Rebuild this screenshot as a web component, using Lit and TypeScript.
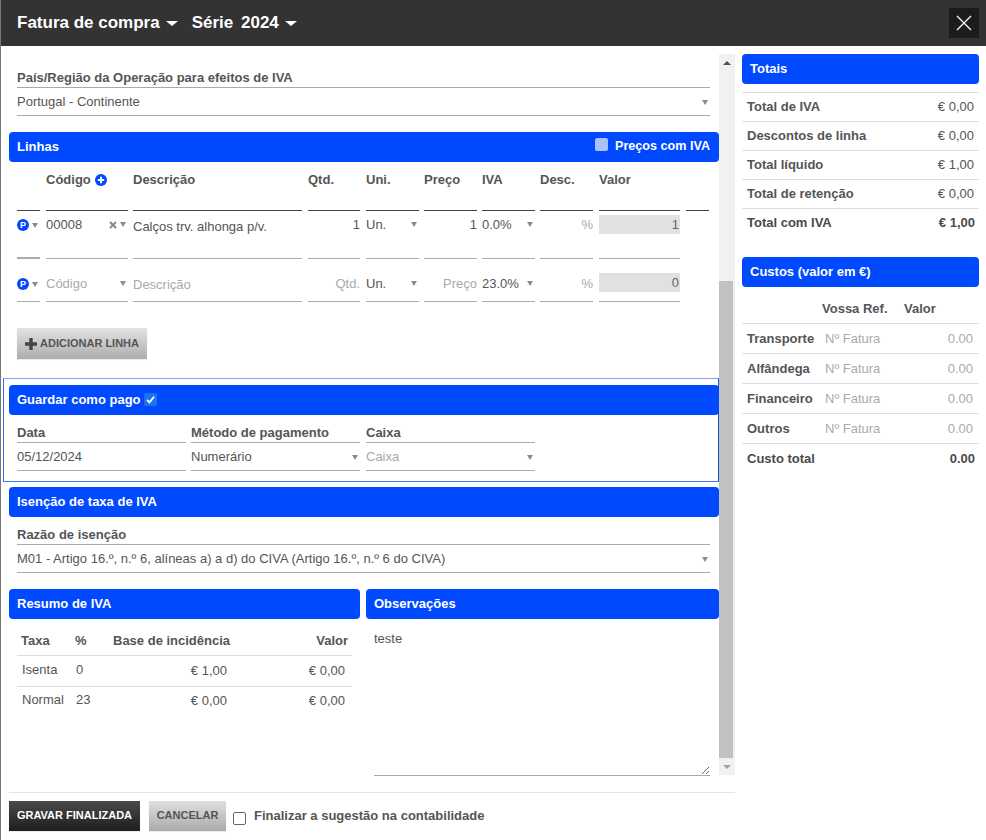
import { LitElement, html, css } from "lit";
import { customElement } from "lit/decorators.js";

const caret = html`<span class="caret"></span>`;
const pill = html`<span class="pcell"><span class="p">P</span>${caret}</span>`;

@customElement("app-root")
export class AppRoot extends LitElement {
  static styles = css`
    :host { display: flex; flex-direction: column; width: 986px; height: 840px; overflow: hidden; background: #fff; font: 13px/1.2 "Liberation Sans", Arial, sans-serif; color: #555; border-left: 1px solid #777; box-sizing: border-box; }
    * { box-sizing: border-box; }
    .head { height: 46px; flex: none; background: #333; display: flex; align-items: center; padding: 0 7px 0 16px; color: #fff; font-weight: bold; font-size: 17px; }
    .head .tri { width: 0; height: 0; border: 6px solid transparent; border-top: 5px solid #fff; border-bottom: 0; margin: 0 14px 0 6px; }
    .head .ser { word-spacing: 3px; }
    .close { margin-left: auto; width: 30px; height: 30px; background: #1c1c1c; display: flex; align-items: center; justify-content: center; }
    .body { flex: 1; display: flex; min-height: 0; }
    .left { width: 734px; flex: none; display: flex; flex-direction: column; padding-top: 8px; }
    .scrollwrap { height: 721px; flex: none; display: flex; }
    .main { width: 718px; flex: none; padding-top: 16px; }
    .sb { width: 16px; flex: none; background: #f1f1f1; display: flex; flex-direction: column; align-items: center; }
    .arrow { height: 17px; flex: none; display: flex; align-items: center; justify-content: center; }
    .up { width: 0; height: 0; border: 4px solid transparent; border-top: 0; border-bottom: 4px solid #505050; }
    .dn { width: 0; height: 0; border: 4px solid transparent; border-bottom: 0; border-top: 4px solid #a3a3a3; }
    .space { height: 210px; flex: none; }
    .thumb { flex: 1; width: 14px; margin-right: 2px; background: #c1c1c1; }
    .pad { padding: 0 9px 0 16px; }
    .bar { height: 30px; margin-left: 8px; background: #0049ff; border-radius: 4px; color: #fff; font-weight: bold; font-size: 13px; padding: 0 8px 1px; display: flex; align-items: center; }
    .m16 { margin-top: 16px; }
    .lab { height: 18px; border-bottom: 1px solid #aaa; font-weight: bold; font-size: 13px; line-height: 15px; color: #555; white-space: nowrap; }
    .val { height: 28px; border-bottom: 1px solid #aaa; padding-top: 1px; display: flex; align-items: center; justify-content: space-between; white-space: nowrap; }
    .mut { color: #aaa; }
    .caret { display: inline-block; width: 0; height: 0; border: 3px solid transparent; border-top: 5px solid #8a8a8a; border-bottom: 0; flex: none; }
    .val .caret { margin-right: 2px; }
    .chk { margin-left: auto; display: flex; align-items: center; font-size: 12.6px; padding-right: 1px; }
    .box { width: 13px; height: 13px; border-radius: 2px; display: inline-block; flex: none; }
    .box.dis { background: #a9c1fb; margin: -4px 7px 0 0; }
    .box.on { background: #1a73f0; margin-left: 3px; display: inline-flex; align-items: center; justify-content: center; }
    .box.off { background: #fff; border: 1px solid #666; }
    .lines { display: grid; grid-template-columns: 24px 82px 170px 53px 53px 53px 53px 54px 82px 23px; column-gap: 5px; }
    .g { margin-right: 1px; }
    .th { height: 49px; border-bottom: 1px solid #444; font-weight: bold; color: #555; padding-top: 10px; line-height: 16px; display: flex; align-items: flex-start; gap: 4px; white-space: nowrap; }
    .th svg { margin-top: 2px; }
    .c { border-bottom: 1px solid #aaa; display: flex; align-items: flex-start; justify-content: space-between; white-space: nowrap; line-height: 15px; }
    .r1 { height: 48px; padding-top: 6px; }
    .r2 { height: 43px; padding-top: 17px; }
    .first.r1 { border-bottom-width: 2px; }
    .none { border: 0; }
    .right { justify-content: flex-end; }
    .dlow { padding-top: 8px; }
    .dlow.r2 { padding-top: 18px; }
    .c .caret { margin: 5px 2px 0 0; }
    .total { height: 19px; background: #e1e1e1; padding: 2px 1px 0 0; color: #666; width: 100%; display: flex; justify-content: flex-end; margin-top: -2px; }
    .r2 .total { margin-top: -3px; }
    .pcell { display: flex; align-items: center; gap: 3px; margin-top: 2px; }
    .pcell .caret { margin: 0 !important; }
    .p { width: 12px; height: 12px; border-radius: 50%; background: #0049ff; color: #fff; font-size: 9px; font-weight: bold; line-height: 12px; text-align: center; flex: none; }
    .x { margin-left: auto; margin-right: 3px; display: flex; padding-top: 4px; }
    .btn { height: 31px; display: inline-flex; align-items: center; font-weight: bold; font-size: 11px; white-space: nowrap; box-shadow: 0 1px 1px rgba(0,0,0,.08); }
    .add { margin: 26px 0 0 16px; padding: 0 7px; width: 130px; gap: 2px; background: linear-gradient(#e2e2e2, #aeaeae); color: #555; }
    .guard { margin: 19px 0 0 2px; height: 104px; border: 1px solid; border-color: #7aa5f8 #0f55e0 #3a7bf0 #2d6fe6; padding: 6px 0 0 5px; }
    .guard .bar { margin-left: 0; width: 710px; }
    .g3 { display: grid; grid-template-columns: 169px 169px 170px; column-gap: 5px; margin-top: 10px; padding-left: 8px; }
    .g3 > :last-child { margin-left: 1px; }
    .wide { margin-top: 10px; }
    .iso { margin-top: 5px; }
    .cols { display: grid; grid-template-columns: 359px 353px; margin-top: 16px; column-gap: 6px; }
    .obs-bar { margin-left: 0; }
    .vat { margin: 0 0 0 16px; width: 335px; }
    .vrow { display: grid; grid-template-columns: 54px 38px 116px 1fr; padding: 0 3px 0 5px; white-space: nowrap; }
    .vrow.h { height: 37px; font-weight: bold; padding: 14px 4px 0 4px; border-bottom: 1px solid #ddd; }
    .vrow.b { height: 31px; padding-top: 6px; border-bottom: 1px solid #ddd; }
    .vrow.b.last { border: 0; padding-top: 5px; }
    .r { text-align: right; }
    .vrow.b .r { padding-top: 1px; }
    .vrow.b .r:last-child { padding-right: 4px; }
    .vrow.b .base { padding-right: 3px; }
    .obs { padding: 12px 9px 0 8px; }
    textarea { display: block; width: 336px; height: 145px; border: 0; border-bottom: 1px solid #aaa; padding: 0; margin: 0; outline: none; font: 13px/1.2 "Liberation Sans", Arial, sans-serif; color: #555; background: #fff; }
    .foot { margin: 17px 0 0 8px; border-top: 1px solid #e4e4e4; padding-top: 8px; display: flex; align-items: flex-start; }
    .save { width: 131px; height: 30px; justify-content: center; background: linear-gradient(#4a4a4a, #1e1e1e); color: #fff; margin-right: 9px; }
    .cancel { width: 77px; height: 30px; justify-content: center; background: linear-gradient(#e0e0e0, #aaaaaa); color: #555; margin-right: 7px; }
    .foot .box { margin: 11px 8px 0 0; }
    .foot label { font-weight: bold; margin-top: 7px; line-height: 15px; color: #555; }
    .side { width: 237px; margin-left: 7px; flex: none; padding-top: 8px; }
    .side .bar { margin-left: 0; }
    .tot { margin-top: 8px; }
    .trow { height: 29px; border-top: 1px solid #ddd; display: flex; justify-content: space-between; align-items: center; padding: 0 5px; }
    .trow.last { padding-right: 4px; color: #4a4a4a; }
    .cost { margin-top: 20px; }
    .crow { display: grid; grid-template-columns: 78px 1fr auto; height: 30px; border-top: 1px solid #ddd; align-items: center; padding: 1px 6px 0 5px; }
    .crow.h { height: 36px; border: 0; font-weight: bold; grid-template-columns: 75px 82px auto; padding-top: 7px; }
    .crow.last { padding: 0 4px 0 5px; color: #4a4a4a; }
  `;

  render() {
    const rowCells = (cls: string, code: unknown, desc: unknown, descMut: boolean, qty: unknown, uni: string, price: unknown, iva: string, tot: string) => html`
      <div class="c first g ${cls}">${pill}</div>
      <div class="c ${cls}">${code}</div>
      <div class="c dlow g ${cls} ${descMut ? "mut" : ""}">${desc}</div>
      <div class="c right g ${cls}">${qty}</div>
      <div class="c ${cls}"><span>${uni}</span>${caret}</div>
      <div class="c right ${cls}">${price}</div>
      <div class="c ${cls}"><span>${iva}</span>${caret}</div>
      <div class="c right mut g ${cls}"><span>%</span></div>
      <div class="c g ${cls}"><div class="total">${tot}</div></div>
      <div class="c none ${cls}"></div>`;

    return html`
      <div class="head">
        <span>Fatura de compra</span><span class="tri"></span>
        <span class="ser">Série 2024</span><span class="tri"></span>
        <div class="close">
          <svg width="16" height="16" viewBox="0 0 16 16"><path d="M1 1L15 15M15 1L1 15" stroke="#fff" stroke-width="1.3" fill="none"/></svg>
        </div>
      </div>
      <div class="body">
        <div class="left">
          <div class="scrollwrap">
            <div class="main">
              <div class="pad">
                <div class="lab">País/Região da Operação para efeitos de IVA</div>
                <div class="val"><span>Portugal - Continente</span>${caret}</div>
              </div>
              <div class="bar m16">Linhas
                <span class="chk"><span class="box dis"></span>Preços com IVA</span>
              </div>
              <div class="pad lines">
                <div class="th g"></div>
                <div class="th">Código
                  <svg width="12" height="12" viewBox="0 0 12 12"><circle cx="6" cy="6" r="6" fill="#0049ff"/><path d="M6 2.8V9.2M2.8 6H9.2" stroke="#fff" stroke-width="2"/></svg>
                </div>
                <div class="th g">Descrição</div>
                <div class="th g">Qtd.</div>
                <div class="th">Uni.</div>
                <div class="th">Preço</div>
                <div class="th">IVA</div>
                <div class="th g">Desc.</div>
                <div class="th g">Valor</div>
                <div class="th"></div>
                ${rowCells("r1",
                  html`<span>00008</span><span class="x"><svg width="8" height="8" viewBox="0 0 8 8"><path d="M1 1L7 7M7 1L1 7" stroke="#888" stroke-width="2"/></svg></span>${caret}`,
                  "Calços trv. alhonga p/v.", false, html`<span>1</span>`, "Un.", html`<span>1</span>`, "0.0%", "1")}
                ${rowCells("r2",
                  html`<span class="mut">Código</span>${caret}`,
                  "Descrição", true, html`<span class="mut">Qtd.</span>`, "Un.", html`<span class="mut">Preço</span>`, "23.0%", "0")}
              </div>
              <div class="btn add">
                <svg width="14" height="14" viewBox="0 0 14 14"><path d="M7 1V13M1 7H13" stroke="#444" stroke-width="3.4"/></svg>
                ADICIONAR LINHA
              </div>
              <div class="guard">
                <div class="bar">Guardar como pago
                  <span class="box on"><svg width="11" height="11" viewBox="0 0 11 11"><path d="M2 5.8L4.5 8.3L9 2.8" stroke="#fff" stroke-width="1.8" fill="none"/></svg></span>
                </div>
                <div class="g3">
                  <div><div class="lab">Data</div><div class="val"><span>05/12/2024</span></div></div>
                  <div><div class="lab">Método de pagamento</div><div class="val"><span>Numerário</span>${caret}</div></div>
                  <div><div class="lab">Caixa</div><div class="val"><span class="mut">Caixa</span>${caret}</div></div>
                </div>
              </div>
              <div class="bar iso">Isenção de taxa de IVA</div>
              <div class="pad wide">
                <div class="lab">Razão de isenção</div>
                <div class="val"><span>M01 - Artigo 16.º, n.º 6, alíneas a) a d) do CIVA (Artigo 16.º, n.º 6 do CIVA)</span>${caret}</div>
              </div>
              <div class="cols">
                <div>
                  <div class="bar">Resumo de IVA</div>
                  <div class="vat">
                    <div class="vrow h"><span>Taxa</span><span>%</span><span>Base de incidência</span><span class="r">Valor</span></div>
                    <div class="vrow b"><span>Isenta</span><span>0</span><span class="r base">€ 1,00</span><span class="r">€ 0,00</span></div>
                    <div class="vrow b last"><span>Normal</span><span>23</span><span class="r base">€ 0,00</span><span class="r">€ 0,00</span></div>
                  </div>
                </div>
                <div>
                  <div class="bar obs-bar">Observações</div>
                  <div class="obs"><textarea .value=${"teste"}></textarea></div>
                </div>
              </div>
            </div>
            <div class="sb">
              <div class="arrow"><span class="up"></span></div>
              <div class="space"></div>
              <div class="thumb"></div>
              <div class="arrow"><span class="dn"></span></div>
            </div>
          </div>
          <div class="foot">
            <div class="btn save">GRAVAR FINALIZADA</div>
            <div class="btn cancel">CANCELAR</div>
            <span class="box off"></span>
            <label>Finalizar a sugestão na contabilidade</label>
          </div>
        </div>
        <div class="side">
          <div class="bar">Totais</div>
          <div class="tot">
            <div class="trow"><b>Total de IVA</b><span>€ 0,00</span></div>
            <div class="trow"><b>Descontos de linha</b><span>€ 0,00</span></div>
            <div class="trow"><b>Total líquido</b><span>€ 1,00</span></div>
            <div class="trow"><b>Total de retenção</b><span>€ 0,00</span></div>
            <div class="trow last"><b>Total com IVA</b><b>€ 1,00</b></div>
          </div>
          <div class="bar cost">Custos (valor em €)</div>
          <div class="crow h"><span></span><span>Vossa Ref.</span><span>Valor</span></div>
          <div class="crow"><b>Transporte</b><span class="mut">Nº Fatura</span><span class="mut">0.00</span></div>
          <div class="crow"><b>Alfândega</b><span class="mut">Nº Fatura</span><span class="mut">0.00</span></div>
          <div class="crow"><b>Financeiro</b><span class="mut">Nº Fatura</span><span class="mut">0.00</span></div>
          <div class="crow"><b>Outros</b><span class="mut">Nº Fatura</span><span class="mut">0.00</span></div>
          <div class="crow last"><b>Custo total</b><span></span><b>0.00</b></div>
        </div>
      </div>
    `;
  }
}
